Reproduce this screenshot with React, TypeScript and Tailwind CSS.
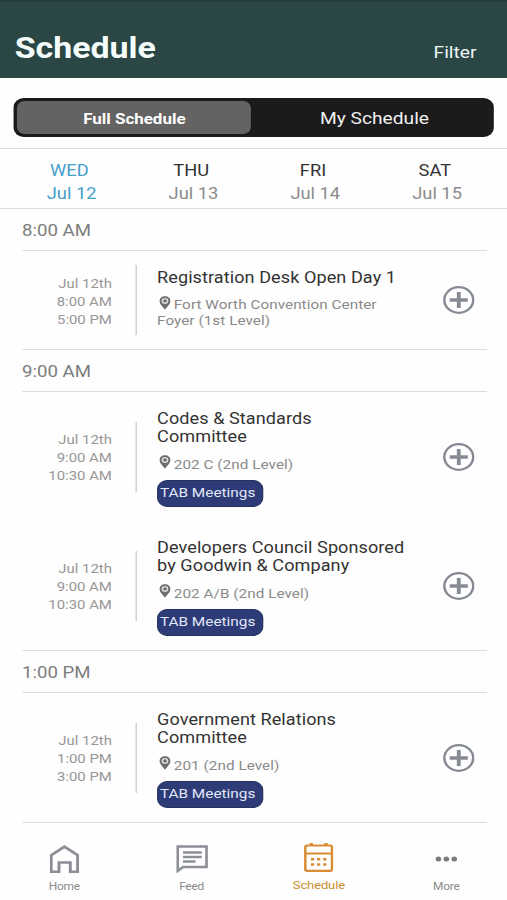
import React from "react";

type Session = {
  times: string[];
  title: string[];
  location: string[];
  tag?: string;
  height: string;
};

const days = [
  { name: "WED", date: "Jul 12", active: true },
  { name: "THU", date: "Jul 13" },
  { name: "FRI", date: "Jul 14" },
  { name: "SAT", date: "Jul 15" },
];

const groups: { time: string; sessions: Session[] }[] = [
  {
    time: "8:00 AM",
    sessions: [
      {
        times: ["Jul 12th", "8:00 AM", "5:00 PM"],
        title: ["Registration Desk Open Day 1"],
        location: ["Fort Worth Convention Center", "Foyer (1st Level)"],
        height: "h-[98px]",
      },
    ],
  },
  {
    time: "9:00 AM",
    sessions: [
      {
        times: ["Jul 12th", "9:00 AM", "10:30 AM"],
        title: ["Codes & Standards", "Committee"],
        location: ["202 C (2nd Level)"],
        tag: "TAB Meetings",
        height: "h-[129px]",
      },
      {
        times: ["Jul 12th", "9:00 AM", "10:30 AM"],
        title: ["Developers Council Sponsored", "by Goodwin & Company"],
        location: ["202 A/B (2nd Level)"],
        tag: "TAB Meetings",
        height: "h-[129px]",
      },
    ],
  },
  {
    time: "1:00 PM",
    sessions: [
      {
        times: ["Jul 12th", "1:00 PM", "3:00 PM"],
        title: ["Government Relations", "Committee"],
        location: ["201 (2nd Level)"],
        tag: "TAB Meetings",
        height: "h-[129px]",
      },
    ],
  },
];

const Pin = () => (
  <svg
    viewBox="0 0 10 14"
    className="inline-block w-[10px] h-[14px] ml-[2px] mr-[2.8px] -mt-[5px] align-middle"
  >
    <path
      d="M5 .2C2.2.2.1 2.3.1 5c0 3 2.9 5.400 4.900 8.800C7 10.400 9.900 8 9.900 5 9.900 2.300 7.800.2 5 .2z"
      fill="#6d6d6d"
    />
    <circle cx="5" cy="4.900" r="3" fill="#dedede" />
    <circle cx="5" cy="4.900" r="1.600" fill="#6d6d6d" />
  </svg>
);

const PlusCircle = () => (
  <svg
    viewBox="0 0 28 28"
    className="w-[28px] h-[28px]"
    fill="none"
    stroke="#868b93"
  >
    <circle cx="14" cy="14" r="12.800" strokeWidth="2.200" />
    <path d="M14 6v16M6 14h16" strokeWidth="3.400" />
  </svg>
);

const SessionRow = ({ session }: { session: Session }) => {
  return (
    <div className={`flex ${session.height}`}>
      <div className="flex items-center w-[101px] shrink-0">
        <div className="w-[79.5px] pt-[3px] text-right text-[13.2px] leading-[18px] text-[#979797]">
          {session.times.map((t) => (
            <p key={t}>{t}</p>
          ))}
        </div>
        <div className="ml-auto w-px h-[70px] bg-[#c4c4c4]" />
      </div>
      <div className="w-[271px] shrink-0 pl-[18.5px] pt-[17.5px] whitespace-nowrap">
        <h3 className="text-[16px] leading-[18.5px] tracking-[0.06px] text-[#333]">
          {session.title.map((t) => (
            <span key={t} className="block">
              {t}
            </span>
          ))}
        </h3>
        <p className="mt-[9px] text-[13.5px] leading-[16px] tracking-[0.05px] text-[#8a8a8a]">
          <Pin />
          {session.location.map((l) => (
            <React.Fragment key={l}>
              {l}
              <br />
            </React.Fragment>
          ))}
        </p>
        {session.tag && (
          <div className="mt-[8px] w-[94px] h-[27px] pl-[1.5px] rounded-[9px] border border-[#25305f] bg-[#2d3b76] text-[13.6px] leading-[22px] text-[#e3e8fb]">
            {session.tag}
          </div>
        )}
      </div>
      <div className="flex items-center shrink-0">
        <PlusCircle />
      </div>
    </div>
  );
};

const HomeIcon = () => (
  <svg viewBox="0 0 26 28" className="w-[26px] h-[28px]" fill="none" stroke="#8b8f95" strokeWidth="2.600">
    <path d="M1.300 10.200L13 1.600l11.700 8.600v16.500h-6.500V17.500H8.200v9.200H1.300z" />
  </svg>
);

const FeedIcon = () => (
  <svg viewBox="0 0 28 28" className="w-[28px] h-[28px]" fill="none" stroke="#8b8f95" strokeWidth="2.400">
    <path d="M1.200 1.500h25.600v20.500H6L1.200 26z" />
    <path d="M6 7.500h16.500M6 12h16.500M6 16.500h11" />
  </svg>
);

const CalendarIcon = () => (
  <svg viewBox="0 0 26 29" className="w-[26px] h-[29px]" fill="none" stroke="#d98c35" strokeWidth="2.200">
    <rect x="1.200" y="2.500" width="23.600" height="25.300" rx="1.500" />
    <path d="M1 10.500h24" />
    <path d="M6.500 0v3M19.500 0v3" strokeWidth="3" />
    <path
      d="M6.200 16.200h2.800M11.600 16.200h2.800M17 16.200h2.800M6.200 21.500h2.800M11.600 21.500h2.800M17 21.500h2.800"
      strokeWidth="2.600"
    />
  </svg>
);

const MoreIcon = () => (
  <svg viewBox="0 0 20 6" className="w-[20px] h-[6px]" fill="#777b80">
    <circle cx="3" cy="3" r="2.500" />
    <circle cx="10" cy="3" r="2.500" />
    <circle cx="17" cy="3" r="2.500" />
  </svg>
);

const tabs = [
  { label: "Home", icon: <HomeIcon /> },
  { label: "Feed", icon: <FeedIcon /> },
  { label: "Schedule", icon: <CalendarIcon />, active: true },
  { label: "More", icon: <MoreIcon /> },
];

const App = () => {
  return (
    <div className="w-[507px] h-[900px] overflow-hidden bg-[#fefefe]">
      {/* the whole screen is drawn a bit wider than its natural proportions */}
      <div className="flex flex-col w-[448.67px] h-[900px] origin-top-left scale-x-[1.13] font-['Roboto',sans-serif]">
        <header className="flex items-end justify-between h-[78px] pl-[13px] pr-[27px] bg-[#2a4745] border-t-2 border-[#243d3b]">
          <h1 className="pb-[11px] text-[30px] leading-[38px] font-bold text-[#f4fdfc]">
            Schedule
          </h1>
          <span className="pb-[14px] text-[17px] leading-[24px] text-[#eef6f5]">
            Filter
          </span>
        </header>

        <div className="h-[70px] px-[12.4px] pt-[19.5px]">
          <div className="flex h-[39.5px] w-[425px] p-[3px] rounded-[9px] bg-[#1b1b1b]">
            <div className="flex items-center justify-center w-[207px] pt-[3px] rounded-[7px] bg-[#636363] text-[15px] font-bold text-white">
              Full Schedule
            </div>
            <div className="flex flex-1 items-center justify-center pl-[6px] pt-[3px] text-[17px] text-[#f1f1f1]">
              My Schedule
            </div>
          </div>
        </div>

        <div className="flex h-[61px] pl-[7.5px] pt-[11px] border-y border-[#dcdcdc]">
          {days.map((d) => (
            <div
              key={d.name}
              className="w-[107.8px] text-center text-[16.2px] leading-[22.5px]"
            >
              <p className={d.active ? "text-[#46a0ca]" : "text-[#333]"}>
                {d.name}
              </p>
              <p
                className={
                  d.active ? "pl-[4px] text-[#46a0ca]" : "pl-[4px] text-[#8c8c8c]"
                }
              >
                {d.date}
              </p>
            </div>
          ))}
        </div>

        <main className="mx-[19.5px] w-[411.5px]">
          {groups.map((g) => (
            <section key={g.time} className="border-b border-[#dcdcdc]">
              <h2 className="h-[42px] pt-px text-[16.5px] leading-[42px] text-[#7d7d7d] border-b border-[#dcdcdc]">
                {g.time}
              </h2>
              {g.sessions.map((s) => (
                <SessionRow key={s.title[0]} session={s} />
              ))}
            </section>
          ))}
        </main>

        <nav className="flex flex-1 pl-[0.5px] pt-[20px]">
          {tabs.map((t) => (
            <div key={t.label} className="flex flex-col items-center w-[112.7px] shrink-0">
              <div
                className={`flex items-center justify-center h-[32px] ${t.active ? "-mt-[2px]" : ""}`}
              >
                {t.icon}
              </div>
              <span
                className={
                  t.active
                    ? "mt-[3px] text-[11.5px] leading-[18px] tracking-[-0.1px] text-[#c98f2f]"
                    : "mt-[3px] text-[10.5px] leading-[18px] tracking-[-0.2px] text-[#8a8a8a]"
                }
              >
                {t.label}
              </span>
            </div>
          ))}
        </nav>
      </div>
    </div>
  );
};

export default App;
